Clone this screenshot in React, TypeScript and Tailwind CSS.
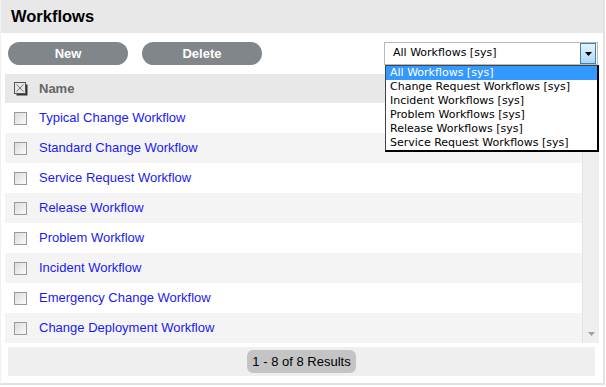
import React from "react";

const rows = [
  "Typical Change Workflow",
  "Standard Change Workflow",
  "Service Request Workflow",
  "Release Workflow",
  "Problem Workflow",
  "Incident Workflow",
  "Emergency Change Workflow",
  "Change Deployment Workflow",
];

const options = [
  "All Workflows [sys]",
  "Change Request Workflows [sys]",
  "Incident Workflows [sys]",
  "Problem Workflows [sys]",
  "Release Workflows [sys]",
  "Service Request Workflows [sys]",
];

function Checkbox() {
  return (
    <div className="w-[13px] h-[13px] border border-[#9a9a9a] bg-gradient-to-br from-[#dcdcdc] to-[#fbfbfb]" />
  );
}

function HeaderCheckbox() {
  return (
    <svg width="14" height="14" viewBox="0 0 14 14">
      <rect x="2.5" y="2.5" width="11" height="11" fill="#333" />
      <rect x="0.5" y="0.5" width="11" height="11" fill="#e6e6e6" stroke="#555" />
      <path d="M2.5 2.5 L9.5 9.5 M9.5 2.5 L2.5 9.5" stroke="#777" strokeWidth="1" />
    </svg>
  );
}

export default function App() {
  return (
    <div className="relative w-[606px] h-[387px] bg-white font-['Liberation_Sans',Arial,sans-serif] overflow-hidden">
      <div className="w-[605px] h-[385px] border-l border-[#f0f0f0] border-r-2 border-b-2 border-r-[#e2e2e2] border-b-[#e2e2e2] flex flex-col">
        {/* Title bar */}
        <div className="h-[33px] bg-[#e8e8e8] flex items-center pl-[10px]">
          <span className="text-[16.5px] font-bold text-black">Workflows</span>
        </div>

        {/* Toolbar */}
        <div className="h-[41px] flex items-start pt-[9px] pl-[7px] pr-[5px]">
          <button className="w-[120px] h-[23px] rounded-full bg-[#80868a] text-white text-[13px] font-bold">
            New
          </button>
          <button className="ml-[14px] w-[120px] h-[23px] rounded-full bg-[#80868a] text-white text-[13px] font-bold">
            Delete
          </button>
          <div className="ml-auto w-[214px] h-[23px] border border-[#b8b8b8] bg-white flex items-center">
            <span className="pl-[8px] flex-1 text-[11px] text-black font-['DejaVu_Sans',sans-serif]">
              All Workflows [sys]
            </span>
            <div className="w-[16px] h-[21px] mr-[1px] border border-[#3c7fb1] bg-gradient-to-b from-[#e4f3fc] to-[#aed8f3] flex items-center justify-center">
              <svg width="7" height="4" viewBox="0 0 7 4">
                <path d="M0 0 H7 L3.5 4 Z" fill="#000" />
              </svg>
            </div>
          </div>
        </div>

        {/* Table */}
        <div className="ml-[4px] mr-[4px] flex flex-col">
          <div className="h-[29px] bg-[#e8e8e8] flex items-center">
            <div className="w-[34px] flex justify-start pl-[9px]">
              <HeaderCheckbox />
            </div>
            <span className="text-[13px] font-bold text-[#666666]">Name</span>
          </div>
          <div className="flex">
            <div className="flex-1 flex flex-col">
              {rows.map((r, i) => (
                <div
                  key={r}
                  className={`h-[30px] flex items-center ${i % 2 === 1 ? "bg-[#f4f4f4]" : "bg-white"}`}
                >
                  <div className="w-[34px] flex justify-start pl-[9px] pt-[1px]">
                    <Checkbox />
                  </div>
                  <span className="text-[13px] text-[#1a1af2] leading-none pb-[2px]">{r}</span>
                </div>
              ))}
            </div>
            <div className="w-[17px] bg-[#efefef] border-l border-[#e4e4e4] flex flex-col justify-end items-center pb-[7px]">
              <svg width="7" height="4" viewBox="0 0 7 4">
                <path d="M0 0 H7 L3.5 4 Z" fill="#a0a0a0" />
              </svg>
            </div>
          </div>
        </div>

        {/* Footer */}
        <div className="mt-[4px] ml-[7px] mr-[8px] h-[29px] bg-[#efefef] flex items-center justify-center">
          <div className="h-[23px] px-[5px] rounded-[6px] bg-[#c4c4c4] flex items-center text-[13px] text-black">
            1 - 8 of 8 Results
          </div>
        </div>
      </div>

      {/* Open dropdown list */}
      <div className="absolute left-[385px] top-[65px] w-[214px] h-[87px] bg-white border border-[#444] border-r-2 border-b-2 border-r-black border-b-black font-['DejaVu_Sans',sans-serif] text-[11px] text-black">
        {options.map((o, i) => (
          <div
            key={o}
            className={`h-[14px] leading-[14px] pl-[4px] ${i === 0 ? "bg-[#3399ff] text-white" : ""}`}
          >
            {o}
          </div>
        ))}
      </div>
    </div>
  );
}
